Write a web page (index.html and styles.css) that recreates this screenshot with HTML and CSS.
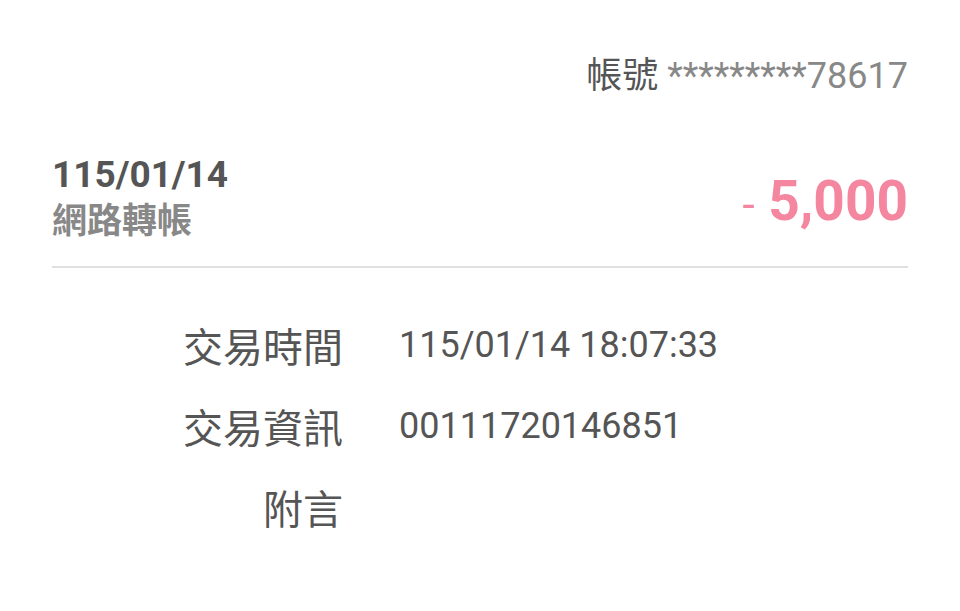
FILE: index.html
```html
<!DOCTYPE html>
<html lang="zh-Hant">
<head>
  <meta charset="UTF-8" />
  <meta name="viewport" content="width=device-width, initial-scale=1.0"/>
  <title>交易明細</title>
  <link rel="stylesheet" href="styles.css">
</head>
<body>
  <div class="page-container">
    <div class="account">帳號 <span class="account-no">*********78617</span></div>

    <div class="summary">
      <div class="summary-left">
        <div class="tx-date">115/01/14</div>
        <div class="tx-type">網路轉帳</div>
      </div>
      <div class="amount"><span class="sign">-</span> 5,000</div>
    </div>

    <div class="details">
      <div class="detail-row">
        <div class="detail-label">交易時間</div>
        <div class="detail-value">115/01/14 18:07:33</div>
      </div>
      <div class="detail-row">
        <div class="detail-label">交易資訊</div>
        <div class="detail-value">00111720146851</div>
      </div>
      <div class="detail-row">
        <div class="detail-label">附言</div>
        <div class="detail-value"></div>
      </div>
    </div>
  </div>
</body>
</html>
```

FILE: styles.css
```css
body {
  margin: 0;
  padding: 0;
  background: #fff;
  font-family: Roboto, "Noto Sans CJK TC", sans-serif;
  color: #555;
}

.page-container {
  padding: 52px 52px 0 52px;
}

.account {
  text-align: right;
  font-size: 36px;
  line-height: 48px;
  color: #555;
}

.account-no {
  color: #888;
}

.summary {
  display: flex;
  justify-content: space-between;
  align-items: center;
  margin-top: 51px;
  padding-bottom: 21px;
  border-bottom: 2px solid #e0e0e0;
}

.tx-date {
  font-size: 37px;
  font-weight: bold;
  line-height: 47px;
  color: #555;
}

.tx-type {
  font-size: 35px;
  font-weight: bold;
  line-height: 47px;
  color: #888;
}

.amount {
  margin-top: 6px;
  font-size: 55px;
  font-weight: bold;
  color: #f4869f;
}

.amount .sign {
  font-weight: normal;
  font-size: 44px;
}

.details {
  padding-top: 36px;
}

.detail-row {
  display: flex;
  align-items: center;
  height: 81px;
}

.detail-label {
  width: 291px;
  text-align: right;
  font-size: 40px;
  color: #555;
}

.detail-value {
  margin-left: 56px;
  font-size: 36px;
  color: #555;
}
```
